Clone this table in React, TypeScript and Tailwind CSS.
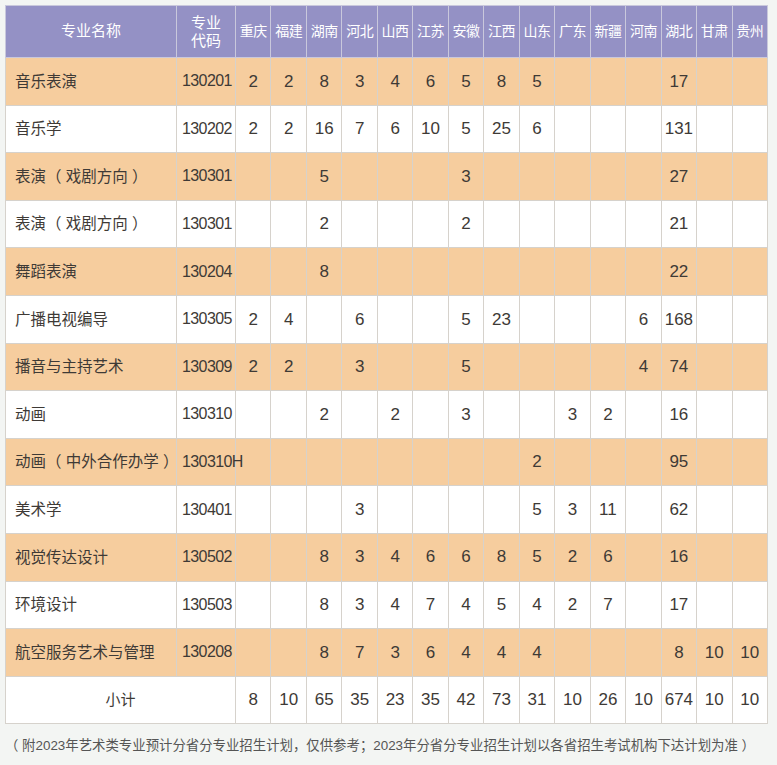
import React from 'react';

const provinces = ['重庆', '福建', '湖南', '河北', '山西', '江苏', '安徽', '江西', '山东', '广东', '新疆', '河南', '湖北', '甘肃', '贵州'];

type Row = { name: string; code: string; v: (number | null)[] };

const _ = null;
const rows: Row[] = [
  { name: '音乐表演', code: '130201', v: [2, 2, 8, 3, 4, 6, 5, 8, 5, _, _, _, 17, _, _] },
  { name: '音乐学', code: '130202', v: [2, 2, 16, 7, 6, 10, 5, 25, 6, _, _, _, 131, _, _] },
  { name: '表演（ 戏剧方向 ）', code: '130301', v: [_, _, 5, _, _, _, 3, _, _, _, _, _, 27, _, _] },
  { name: '表演（ 戏剧方向 ）', code: '130301', v: [_, _, 2, _, _, _, 2, _, _, _, _, _, 21, _, _] },
  { name: '舞蹈表演', code: '130204', v: [_, _, 8, _, _, _, _, _, _, _, _, _, 22, _, _] },
  { name: '广播电视编导', code: '130305', v: [2, 4, _, 6, _, _, 5, 23, _, _, _, 6, 168, _, _] },
  { name: '播音与主持艺术', code: '130309', v: [2, 2, _, 3, _, _, 5, _, _, _, _, 4, 74, _, _] },
  { name: '动画', code: '130310', v: [_, _, 2, _, 2, _, 3, _, _, 3, 2, _, 16, _, _] },
  { name: '动画（ 中外合作办学 ）', code: '130310H', v: [_, _, _, _, _, _, _, _, 2, _, _, _, 95, _, _] },
  { name: '美术学', code: '130401', v: [_, _, _, 3, _, _, _, _, 5, 3, 11, _, 62, _, _] },
  { name: '视觉传达设计', code: '130502', v: [_, _, 8, 3, 4, 6, 6, 8, 5, 2, 6, _, 16, _, _] },
  { name: '环境设计', code: '130503', v: [_, _, 8, 3, 4, 7, 4, 5, 4, 2, 7, _, 17, _, _] },
  { name: '航空服务艺术与管理', code: '130208', v: [_, _, 8, 7, 3, 6, 4, 4, 4, _, _, _, 8, 10, 10] },
];

const totals = [8, 10, 65, 35, 23, 35, 42, 73, 31, 10, 26, 10, 674, 10, 10];

const font = { fontFamily: '"Liberation Sans", "Noto Sans CJK SC", sans-serif' };

export default function App() {
  return (
    <div className="w-[777px] h-[765px] bg-[#f3f5f3] pt-[5px] pl-[5px] overflow-hidden" style={font}>
      <table className="border-collapse table-fixed w-[762px] text-[#3e3a36]">
        <colgroup>
          <col className="w-[171px]" />
          <col className="w-[59px]" />
          {provinces.map((p) => (
            <col key={p} className="w-[35.47px]" />
          ))}
        </colgroup>
        <thead>
          <tr className="h-[52px] bg-[#9491c5] text-white">
            <th className="border border-[#c9c8dc] text-[15px] font-normal">专业名称</th>
            <th className="border border-[#c9c8dc] text-[15px] font-normal leading-[18px]">
              专业
              <br />
              代码
            </th>
            {provinces.map((p) => (
              <th key={p} className="border border-[#c9c8dc] text-[14px] font-normal tracking-[-0.5px] px-0">
                {p}
              </th>
            ))}
          </tr>
        </thead>
        <tbody>
          {rows.map((r, i) => (
            <tr key={i} className={i % 2 === 0 ? 'h-[47.6px] bg-[#f6cd9e]' : 'h-[47.6px] bg-white'}>
              <td className="border border-[#d6d2cc] pl-[9px] text-[15.5px] whitespace-pre">{r.name}</td>
              <td className="border border-[#d6d2cc] pl-[5px] text-[16px] tracking-[-0.6px] whitespace-nowrap">{r.code}</td>
              {r.v.map((n, j) => (
                <td key={j} className="border border-[#d6d2cc] text-center text-[17px] px-0">
                  {n ?? ''}
                </td>
              ))}
            </tr>
          ))}
          <tr className="h-[47.6px] bg-white">
            <td colSpan={2} className="border border-[#d6d2cc] text-center text-[15px]">
              小计
            </td>
            {totals.map((n, j) => (
              <td key={j} className="border border-[#d6d2cc] text-center text-[17px] px-0">
                {n}
              </td>
            ))}
          </tr>
        </tbody>
      </table>
      <p className="mt-[12px] text-[13.4px] text-[#555] whitespace-pre">
        （ 附2023年艺术类专业预计分省分专业招生计划，仅供参考；2023年分省分专业招生计划以各省招生考试机构下达计划为准 ）
      </p>
    </div>
  );
}
